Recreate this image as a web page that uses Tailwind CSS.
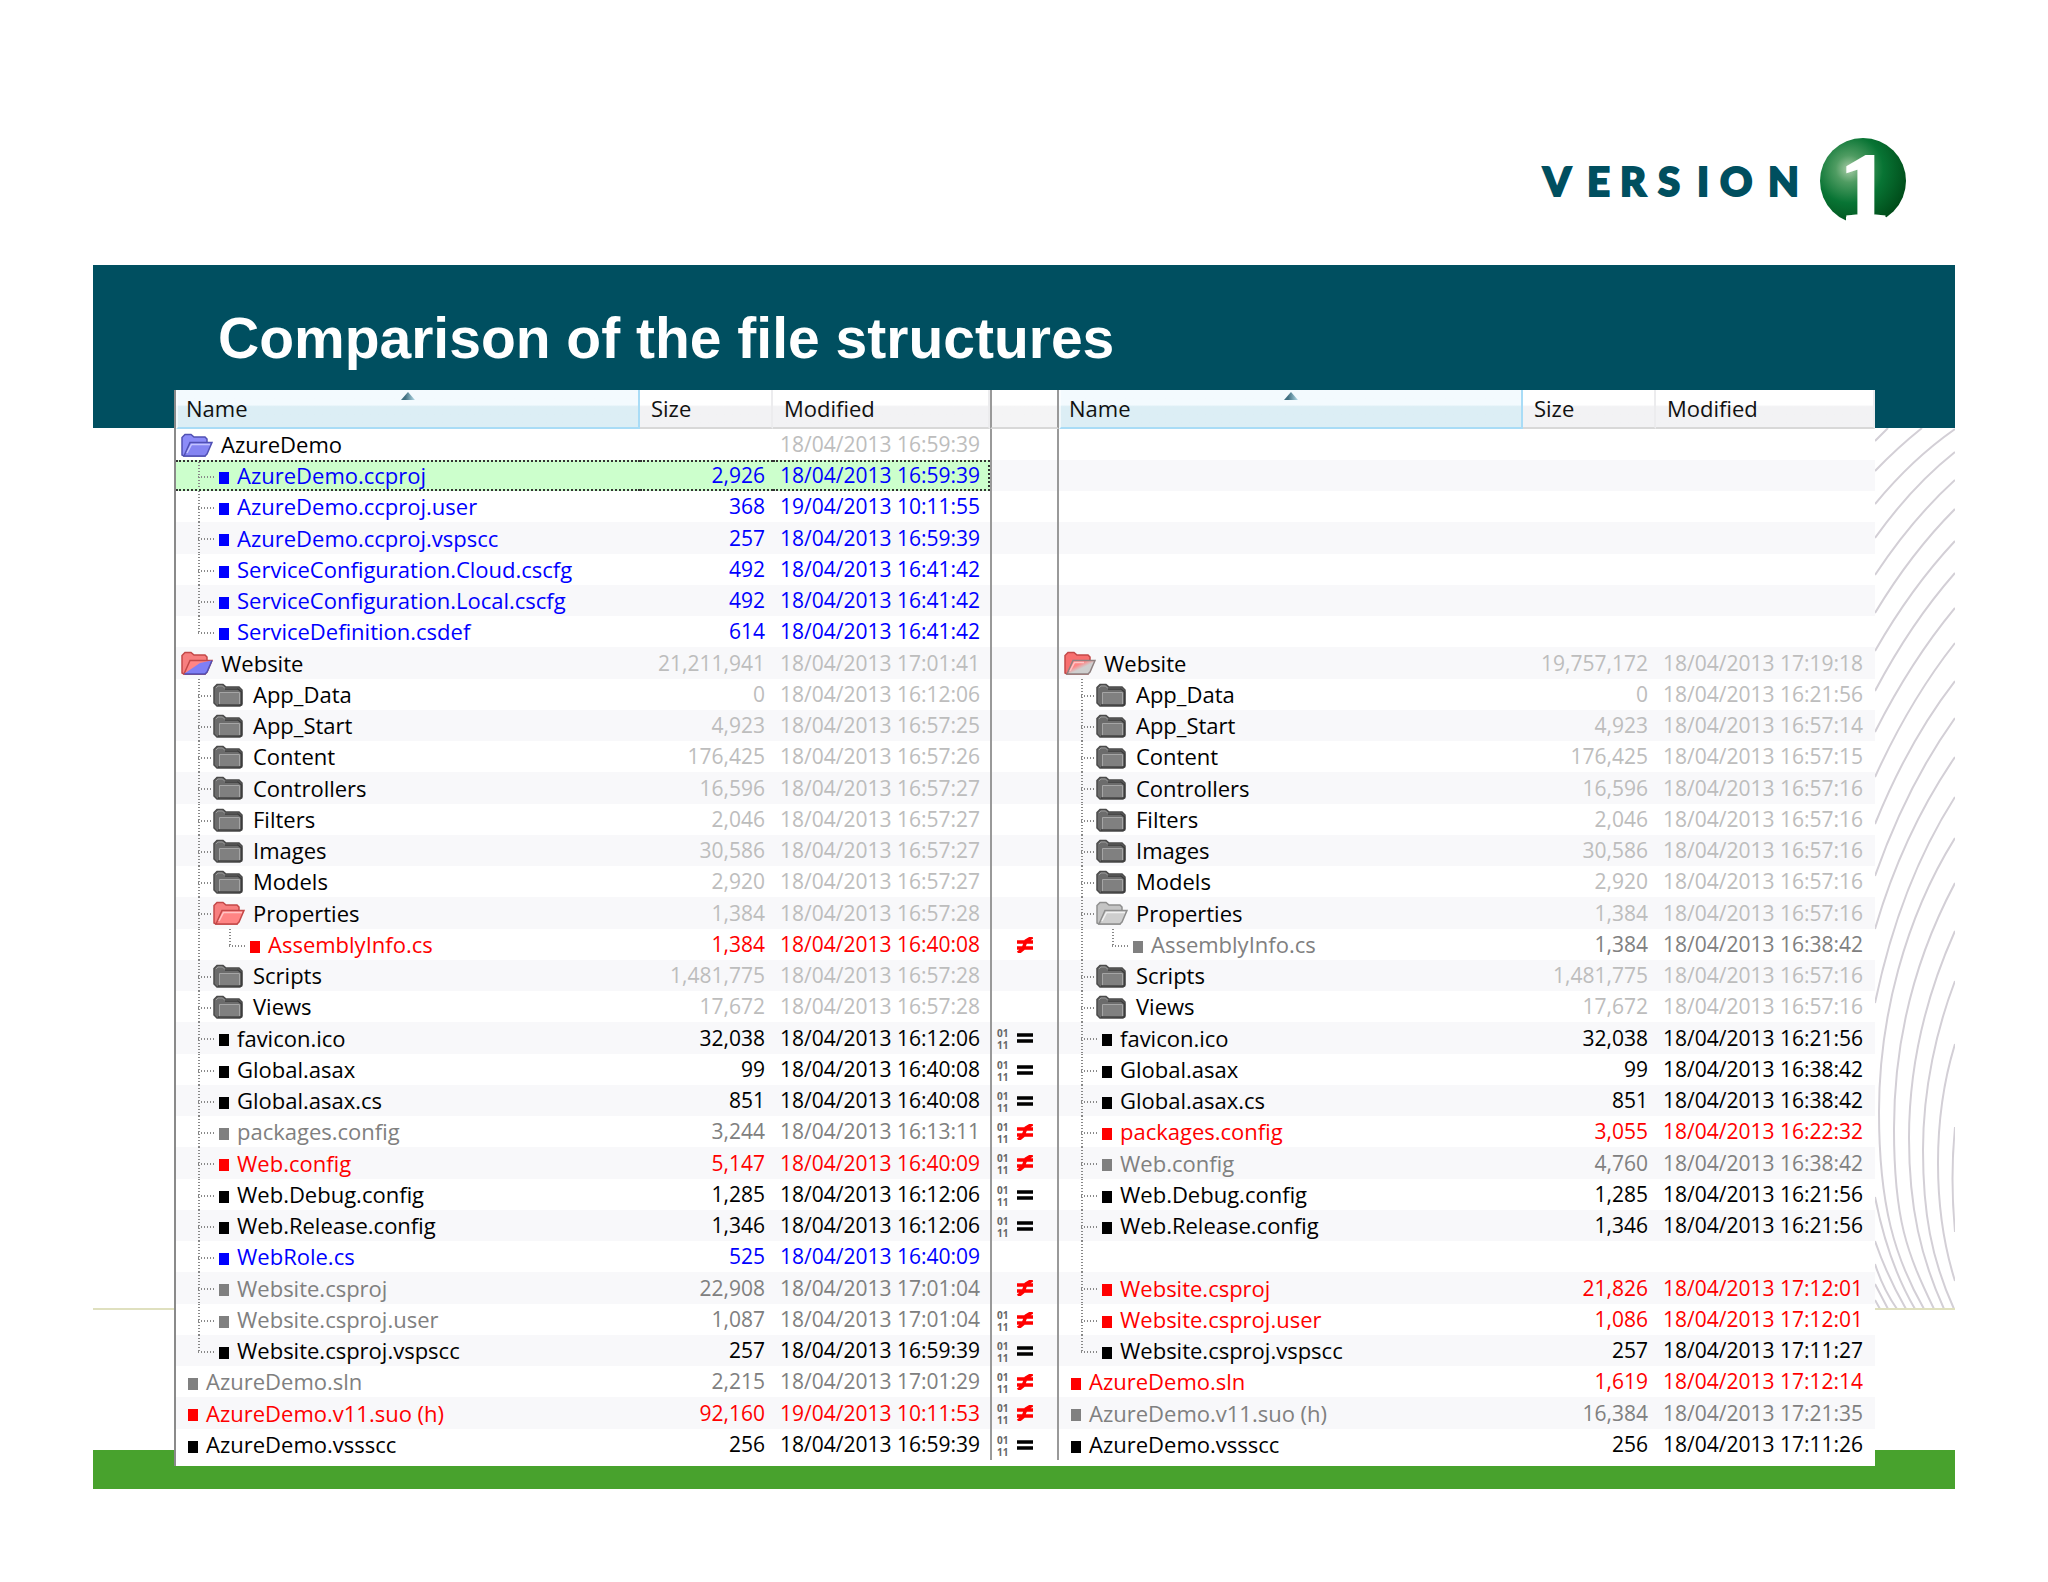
<!DOCTYPE html>
<html lang="en">

<head>
    <meta charset="UTF-8">
    <meta name="viewport" content="width=device-width, initial-scale=1.0">
    <title>Comparison of the file structures</title>
    <script src="https://cdn.jsdelivr.net/npm/@tailwindcss/browser@4"></script>
</head>

<body class="bg-white px-[93px] font-['Liberation_Sans',sans-serif]">
    <!-- Shared icons -->
    <svg class="absolute h-0 w-0" aria-hidden="true">
        <defs>
            <linearGradient id="splitGray" x1="0" y1="0" x2="1" y2="1">
                <stop offset="0.35" stop-color="#ff8585" />
                <stop offset="0.55" stop-color="#cfcfcf" />
            </linearGradient>
            <linearGradient id="arrowFill" x1="0" y1="0" x2="1" y2="0">
                <stop offset="0.3" stop-color="#3f6f80" />
                <stop offset="1" stop-color="#b5dbe8" />
            </linearGradient>
        </defs>
        <symbol id="folder-closed" viewBox="0 0 32 24">
            <path d="M1 4.500L4 1.500H10L13 4H26L29 7V21L27 23H4L1 20Z" fill="#6c6c6c" stroke="#4a4a4a" stroke-width="1.500" />
            <path d="M3 5L5 3H9.500L12 5.500H24" fill="none" stroke="#9a9a9a" />
            <path d="M6.500 22V9.500H26.500V21.500Z" fill="#808080" stroke="#a5a5a5" />
            <path d="M12 6H25L28.500 9V22H5" fill="none" stroke="#3c3c3c" stroke-width="1.500" />
        </symbol>
        <symbol id="folder-blue" viewBox="0 0 32 24">
            <path d="M1 22V4.500L4 1.500H10L13 4H24L26 6V10L24 23H3Z" fill="#8c8cf8" stroke="#5050b4" stroke-width="1.500" />
            <path d="M3 23L9 9.500H31L26 21L24 23Z" fill="#8484f2" stroke="#5050b4" stroke-width="1.500" />
            <path d="M6 20L10.500 11.500H29" fill="none" stroke="#c4c4ff" stroke-width="1.500" />
        </symbol>
        <symbol id="folder-red" viewBox="0 0 32 24">
            <path d="M1 22V4.500L4 1.500H10L13 4H24L26 6V10L24 23H3Z" fill="#f77f7f" stroke="#c34848" stroke-width="1.500" />
            <path d="M3 23L9 9.500H31L26 21L24 23Z" fill="#ff8484" stroke="#c34848" stroke-width="1.500" />
            <path d="M6 20L10.500 11.500H29" fill="none" stroke="#ffc4c4" stroke-width="1.500" />
        </symbol>
        <symbol id="folder-light" viewBox="0 0 32 24">
            <path d="M1 22V4.500L4 1.500H10L13 4H24L26 6V10L24 23H3Z" fill="#c4c4c4" stroke="#8e8e8e" stroke-width="1.500" />
            <path d="M3 23L9 9.500H31L26 21L24 23Z" fill="#cecece" stroke="#8e8e8e" stroke-width="1.500" />
            <path d="M6 20L10.500 11.500H29" fill="none" stroke="#f0f0f0" stroke-width="1.500" />
        </symbol>
        <symbol id="folder-red-blue" viewBox="0 0 32 24">
            <path d="M1 22V4.500L4 1.500H10L13 4H24L26 6V10L24 23H3Z" fill="#f77f7f" stroke="#c34848" stroke-width="1.500" />
            <path d="M3 23L9 9.500H31L26 21L24 23Z" fill="#ff8585" stroke="#c34848" stroke-width="1.500" />
            <path d="M3.500 22.500L19 12L30.500 9.500L26 21L24 23H4Z" fill="#7f7ff5" />
            <path d="M3.500 23H24L26 21L31 9.500" fill="none" stroke="#5050b4" stroke-width="1.500" />
        </symbol>
        <symbol id="folder-red-gray" viewBox="0 0 32 24">
            <path d="M1 22V4.500L4 1.500H10L13 4H24L26 6V10L24 23H3Z" fill="#f76f6f" stroke="#c34848" stroke-width="1.500" />
            <path d="M3 23L9 9.500H31L26 21L24 23Z" fill="url(#splitGray)" stroke="#8e8080" stroke-width="1.500" />
            <path d="M6 20L10.500 11.500H20" fill="none" stroke="#ffc4c4" stroke-width="1.500" />
        </symbol>
        <symbol id="equal" viewBox="0 0 16 16">
            <path d="M0 5H16M0 11H16" stroke="#000" stroke-width="3.500" />
        </symbol>
        <symbol id="not-equal" viewBox="0 0 16 16">
            <path d="M0 5H16M0 11H16M15.500 0L9 4L6 12L1 16" fill="none" stroke="#f00" stroke-width="3.500" />
        </symbol>
    </svg>

    <header class="flex h-[265px] justify-end pt-[138px] pr-[46px]">
        <svg class="h-[88px] w-[366px] overflow-visible" viewBox="0 0 366 88" role="img" aria-label="Version 1">
            <defs>
                <radialGradient id="ball" cx="0.34" cy="0.36" r="0.72">
                    <stop offset="0" stop-color="#a9cda8" />
                    <stop offset="0.22" stop-color="#4f9c62" />
                    <stop offset="0.55" stop-color="#087434" />
                    <stop offset="1" stop-color="#004a18" />
                </radialGradient>
            </defs>
            <text y="58" x="0 44 77 115 154 177 225" font-size="40" font-weight="900" fill="#004f5f" stroke="#004f5f" stroke-width="2" class="font-['Lato',sans-serif]">VERSION</text>
            <circle cx="320" cy="43" r="43" fill="url(#ball)" />
            <rect x="303" y="79" width="40" height="9" fill="#fff" />
            <text x="297" y="83" font-size="98" font-weight="700" fill="#fff" stroke="#fff" stroke-width="3" class="font-['Liberation_Serif',serif]">1</text>
        </svg>
    </header>

    <div class="h-[163px] bg-[#004f60] pt-10 pl-[125px]">
        <h1 class="text-[57px] leading-[66px] font-bold text-white">Comparison of the file structures</h1>
    </div>

    <main class="relative -mt-[38px] pr-20 pb-[23px] pl-[81px]">
        <!-- Slide background -->
        <svg class="absolute top-[38px] right-0 h-[881px] w-20" viewBox="0 0 80 881" fill="none" stroke="#d3cfd6" stroke-width="2" aria-hidden="true">
            <path d="M0 13L13 0M0 43Q22 20 47 0M0 76Q37 31 80 1M0 110Q37 58 80 24M0 147Q37 91 80 52M0 185Q36 125 80 81M0 223Q36 160 80 113M0 263Q36 195 80 145M0 304Q36 233 80 180M0 349Q35 272 80 215M0 396Q34 312 80 253M0 448Q32 357 80 290M0 501Q28 405 80 329M0 575Q25 455 80 369" />
            <path d="M80 410C30 490 4 590 4 684S20 830 49 881M80 455C40 530 19 610 19 701S32 825 59 881M80 503C50 570 34 640 34 710S46 830 69 881M80 553C62 600 48 660 48 722S56 830 79 881M80 616C68 655 63 695 63 735S68 815 80 853M80 699Q75 750 80 804" />
            <path d="M0 769Q13 835 40 881M0 813Q12 848 31 881M0 836Q8 861 22 881M0 856L13 881M0 872L5 881" />
        </svg>
        <div class="absolute inset-x-0 bottom-[179px] h-[2px] bg-[#dfe0bf]"></div>
        <div class="absolute inset-x-0 bottom-0 h-[39px] bg-[#48a22d]"></div>

        <div class="relative border-l-2 border-[#8a8a8a] bg-white pb-1.5">
            <table class="w-full table-fixed border-separate border-spacing-0 font-['Open_Sans',sans-serif] text-[21px] leading-[27px] whitespace-nowrap">
                <colgroup>
                    <col>
                    <col class="w-[133px]">
                    <col class="w-[217px]">
                    <col class="w-[69px]">
                    <col>
                    <col class="w-[133px]">
                    <col class="w-[219px]">
                </colgroup>
                <thead>
                    <tr id="head" class="h-[39px] text-left text-[22px] text-[#111]"></tr>
                </thead>
                <tbody id="rows"></tbody>
            </table>
        </div>
    </main>

    <script>
        const colors = {
            dim: 'text-[#bdbdbd]',
            gray: 'text-[#808080]',
            red: 'text-[#ff0000]',
            blue: 'text-[#0000ff]',
            black: 'text-black'
        };

        // [depth, left, sign, right]; a side is [name, kind, color, size, modified]
        const rows = [
            [0, ['AzureDemo', 'blue', 'dim', '', '18/04/2013 16:59:39'], '', null],
            [1, ['AzureDemo.ccproj', 'file', 'blue', '2,926', '18/04/2013 16:59:39'], '', null],
            [1, ['AzureDemo.ccproj.user', 'file', 'blue', '368', '19/04/2013 10:11:55'], '', null],
            [1, ['AzureDemo.ccproj.vspscc', 'file', 'blue', '257', '18/04/2013 16:59:39'], '', null],
            [1, ['ServiceConfiguration.Cloud.cscfg', 'file', 'blue', '492', '18/04/2013 16:41:42'], '', null],
            [1, ['ServiceConfiguration.Local.cscfg', 'file', 'blue', '492', '18/04/2013 16:41:42'], '', null],
            [1, ['ServiceDefinition.csdef', 'file', 'blue', '614', '18/04/2013 16:41:42'], '', null],
            [0, ['Website', 'red-blue', 'dim', '21,211,941', '18/04/2013 17:01:41'], '', ['Website', 'red-gray', 'dim', '19,757,172', '18/04/2013 17:19:18']],
            [1, ['App_Data', 'closed', 'dim', '0', '18/04/2013 16:12:06'], '', ['App_Data', 'closed', 'dim', '0', '18/04/2013 16:21:56']],
            [1, ['App_Start', 'closed', 'dim', '4,923', '18/04/2013 16:57:25'], '', ['App_Start', 'closed', 'dim', '4,923', '18/04/2013 16:57:14']],
            [1, ['Content', 'closed', 'dim', '176,425', '18/04/2013 16:57:26'], '', ['Content', 'closed', 'dim', '176,425', '18/04/2013 16:57:15']],
            [1, ['Controllers', 'closed', 'dim', '16,596', '18/04/2013 16:57:27'], '', ['Controllers', 'closed', 'dim', '16,596', '18/04/2013 16:57:16']],
            [1, ['Filters', 'closed', 'dim', '2,046', '18/04/2013 16:57:27'], '', ['Filters', 'closed', 'dim', '2,046', '18/04/2013 16:57:16']],
            [1, ['Images', 'closed', 'dim', '30,586', '18/04/2013 16:57:27'], '', ['Images', 'closed', 'dim', '30,586', '18/04/2013 16:57:16']],
            [1, ['Models', 'closed', 'dim', '2,920', '18/04/2013 16:57:27'], '', ['Models', 'closed', 'dim', '2,920', '18/04/2013 16:57:16']],
            [1, ['Properties', 'red', 'dim', '1,384', '18/04/2013 16:57:28'], '', ['Properties', 'light', 'dim', '1,384', '18/04/2013 16:57:16']],
            [2, ['AssemblyInfo.cs', 'file', 'red', '1,384', '18/04/2013 16:40:08'], 'ne', ['AssemblyInfo.cs', 'file', 'gray', '1,384', '18/04/2013 16:38:42']],
            [1, ['Scripts', 'closed', 'dim', '1,481,775', '18/04/2013 16:57:28'], '', ['Scripts', 'closed', 'dim', '1,481,775', '18/04/2013 16:57:16']],
            [1, ['Views', 'closed', 'dim', '17,672', '18/04/2013 16:57:28'], '', ['Views', 'closed', 'dim', '17,672', '18/04/2013 16:57:16']],
            [1, ['favicon.ico', 'file', 'black', '32,038', '18/04/2013 16:12:06'], 'b-eq', ['favicon.ico', 'file', 'black', '32,038', '18/04/2013 16:21:56']],
            [1, ['Global.asax', 'file', 'black', '99', '18/04/2013 16:40:08'], 'b-eq', ['Global.asax', 'file', 'black', '99', '18/04/2013 16:38:42']],
            [1, ['Global.asax.cs', 'file', 'black', '851', '18/04/2013 16:40:08'], 'b-eq', ['Global.asax.cs', 'file', 'black', '851', '18/04/2013 16:38:42']],
            [1, ['packages.config', 'file', 'gray', '3,244', '18/04/2013 16:13:11'], 'b-ne', ['packages.config', 'file', 'red', '3,055', '18/04/2013 16:22:32']],
            [1, ['Web.config', 'file', 'red', '5,147', '18/04/2013 16:40:09'], 'b-ne', ['Web.config', 'file', 'gray', '4,760', '18/04/2013 16:38:42']],
            [1, ['Web.Debug.config', 'file', 'black', '1,285', '18/04/2013 16:12:06'], 'b-eq', ['Web.Debug.config', 'file', 'black', '1,285', '18/04/2013 16:21:56']],
            [1, ['Web.Release.config', 'file', 'black', '1,346', '18/04/2013 16:12:06'], 'b-eq', ['Web.Release.config', 'file', 'black', '1,346', '18/04/2013 16:21:56']],
            [1, ['WebRole.cs', 'file', 'blue', '525', '18/04/2013 16:40:09'], '', null],
            [1, ['Website.csproj', 'file', 'gray', '22,908', '18/04/2013 17:01:04'], 'ne', ['Website.csproj', 'file', 'red', '21,826', '18/04/2013 17:12:01']],
            [1, ['Website.csproj.user', 'file', 'gray', '1,087', '18/04/2013 17:01:04'], 'b-ne', ['Website.csproj.user', 'file', 'red', '1,086', '18/04/2013 17:12:01']],
            [1, ['Website.csproj.vspscc', 'file', 'black', '257', '18/04/2013 16:59:39'], 'b-eq', ['Website.csproj.vspscc', 'file', 'black', '257', '18/04/2013 17:11:27']],
            [0, ['AzureDemo.sln', 'file', 'gray', '2,215', '18/04/2013 17:01:29'], 'b-ne', ['AzureDemo.sln', 'file', 'red', '1,619', '18/04/2013 17:12:14']],
            [0, ['AzureDemo.v11.suo (h)', 'file', 'red', '92,160', '19/04/2013 10:11:53'], 'b-ne', ['AzureDemo.v11.suo (h)', 'file', 'gray', '16,384', '18/04/2013 17:21:35']],
            [0, ['AzureDemo.vssscc', 'file', 'black', '256', '18/04/2013 16:59:39'], 'b-eq', ['AzureDemo.vssscc', 'file', 'black', '256', '18/04/2013 17:11:26']]
        ];

        const selected = 1;
        const folderPad = ['pl-[5px]', 'pl-[37px]'];
        const filePad = ['pl-3', 'pl-[43px]', 'pl-[74px]'];

        const nameHead = `
            <th class="relative border-x-2 border-b-2 border-l-white/60 border-r-[#a9dcf6] border-b-[#a9dcf6] bg-linear-to-b from-[#f3fafe] from-40% to-[#dceef5] to-45% p-0 font-normal">
                <button class="w-full pl-2 text-left">Name</button>
                <svg class="absolute top-0.5 left-1/2 h-2 w-3.5 -translate-x-1/2" viewBox="0 0 14 8"><path d="M0 8L7 0L14 8Z" fill="url(#arrowFill)" /></svg>
            </th>`;
        const plainHead = (label) => `
            <th class="border-r-2 border-b-2 border-r-[#ececee] border-b-[#d8d8d8] bg-linear-to-b from-white from-40% to-[#f2f2f4] to-45% p-0 font-normal">
                <button class="w-full pl-[11px] text-left">${label}</button>
            </th>`;
        const side = nameHead + plainHead('Size') + plainHead('Modified');
        document.getElementById('head').innerHTML = side +
            '<td class="border-x-2 border-b-2 border-x-[#999] border-b-[#d8d8d8] bg-linear-to-b from-white from-40% to-[#f4f4f5] to-45%"></td>' + side;

        const vertical = 'absolute w-[2px] bg-[repeating-linear-gradient(180deg,#888_0_1px,transparent_1px_3px)]';
        const across = 'absolute top-1/2 h-[2px] bg-[repeating-linear-gradient(90deg,#888_0_1px,transparent_1px_3px)]';

        // dotted guides that join a row to its parent
        function guides(i) {
            const depth = rows[i][0];
            const next = rows[i + 1] ? rows[i + 1][0] : 0;
            let html = '';
            if (depth > 0) {
                html += `<span class="${vertical} top-0 left-[22px] ${next === 0 ? 'h-1/2' : 'h-full'}"></span>`;
            }
            if (depth === 1) {
                html += `<span class="${across} left-[22px] ${rows[i][1][1] === 'file' ? 'w-[18px]' : 'w-[14px]'}"></span>`;
            }
            if (depth === 2) {
                html += `<span class="${vertical} top-0 left-[53px] h-1/2"></span>`;
                html += `<span class="${across} left-[53px] w-[18px]"></span>`;
            }
            return html;
        }

        function cells(entry, i, isSelected) {
            const edge = isSelected ? 'border-y-2 border-dotted border-[#333] bg-[#ccffcc]' : '';
            if (!entry) {
                // a gap inside a folder keeps the folder's guide
                const inFolder = i > 0 && rows[i - 1][3];
                return `<td class="relative p-0">${inFolder ? `<span class="${vertical} top-0 left-[22px] h-full"></span>` : ''}</td><td></td><td></td>`;
            }
            const [name, kind, color, size, modified] = entry;
            const depth = rows[i][0];
            const isFile = kind === 'file';
            const icon = isFile
                ? '<span class="mt-1 h-3 w-2.5 shrink-0 bg-current"></span>'
                : `<svg class="h-6 w-8 shrink-0"><use href="#folder-${kind}" /></svg>`;
            return `
                <td class="relative p-0 text-[22px] ${edge} ${isFile ? colors[color] : 'text-black'}">
                    ${guides(i)}
                    <div class="flex items-center gap-2 ${isFile ? filePad[depth] : folderPad[depth]}">${icon}${name}</div>
                </td>
                <td class="p-0 pr-2 text-right ${edge} ${colors[color]}">${size}</td>
                <td class="p-0 pl-[7px] ${edge} ${isSelected ? 'border-r-2' : ''} ${colors[color]}">${modified}</td>`;
        }

        function sign(kind) {
            if (!kind) {
                return '';
            }
            const bits = kind.startsWith('b-')
                ? '<span class="w-3.5 pt-0.5 font-[\'Liberation_Mono\',monospace] text-[10px] leading-3 font-bold text-[#666]">01<br>11</span>'
                : '<span class="w-3.5"></span>';
            const icon = kind.endsWith('ne') ? 'not-equal' : 'equal';
            return `<div class="flex items-center gap-1.5 pl-[5px]">${bits}<svg class="h-4 w-4"><use href="#${icon}" /></svg></div>`;
        }

        document.getElementById('rows').innerHTML = rows.map(([depth, left, mark, right], i) => `
            <tr class="h-[31px] even:bg-[#f8f8fa] nth-[4n]:h-8">
                ${cells(left, i, i === selected)}
                <td class="border-x-2 border-[#999] p-0">${sign(mark)}</td>
                ${cells(right, i, false)}
            </tr>`).join('');
    </script>
</body>

</html>
